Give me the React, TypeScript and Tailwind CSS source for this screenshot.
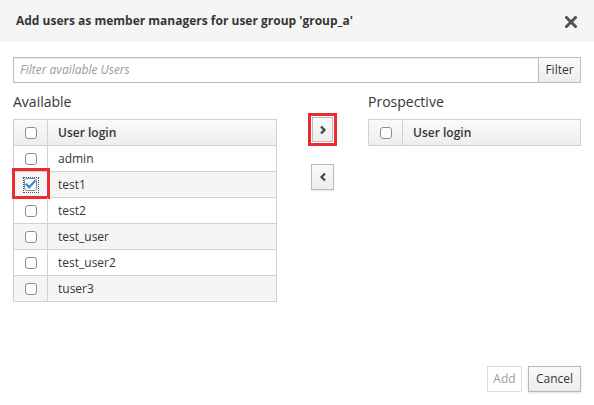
import React from "react";

const Box = ({ checked = false }: { checked?: boolean }) =>
  checked ? (
    <div className="relative w-[14px] h-[14px] outline outline-1 outline-dotted outline-[#2b5b8a] outline-offset-0 flex items-center justify-center">
      <svg width="13" height="13" viewBox="0 0 13 13">
        <rect x="0.5" y="0.5" width="12" height="12" rx="2.5" fill="#fff" stroke="#8b8d8f" />
        <path d="M2.6 6.6 L5.2 9.2 L10.6 3.4" fill="none" stroke="#3c8bcc" strokeWidth="2.4" strokeLinecap="square" />
      </svg>
    </div>
  ) : (
    <div className="w-[12px] h-[12px] rounded-[3px] border border-[#8b8d8f] bg-white" />
  );

const Table = ({
  rows,
  width,
  selected,
}: {
  rows: string[];
  width: string;
  selected?: number;
}) => (
  <div className={`${width} border border-[#d1d1d1]`}>
    <div className="flex h-[25px] bg-gradient-to-b from-[#fafafa] to-[#ededed]">
      <div className="w-[34px] border-r border-[#d1d1d1] flex items-center justify-center">
        <Box />
      </div>
      <div className="pl-[10px] flex items-center text-[12px] font-semibold text-[#363636]">User login</div>
    </div>
    {rows.map((r, i) => (
      <div
        key={r}
        className={`flex h-[26px] border-t border-[#d1d1d1] ${i % 2 === 1 ? "bg-[#f5f5f5]" : "bg-white"}`}
      >
        <div className="relative w-[34px] border-r border-[#d1d1d1] flex items-center justify-center">
          <Box checked={selected === i} />
          {selected === i && (
            <div className="absolute left-[-2px] top-[-4px] w-[38px] h-[31px] border-[3px] border-[#ec2b2f]" />
          )}
        </div>
        <div className="pl-[10px] flex items-center text-[12px] text-[#363636]">{r}</div>
      </div>
    ))}
  </div>
);

const Chevron = ({ dir }: { dir: "r" | "l" }) => (
  <svg width="8" height="10" viewBox="0 0 8 10">
    {dir === "r" ? (
      <path d="M2 1.5 L5.5 5 L2 8.5" fill="none" stroke="#3f4346" strokeWidth="2.2" />
    ) : (
      <path d="M6 1.5 L2.5 5 L6 8.5" fill="none" stroke="#3f4346" strokeWidth="2.2" />
    )}
  </svg>
);

export default function App() {
  return (
    <div
      className="w-[594px] h-[405px] bg-white flex flex-col text-[#363636]"
      style={{ fontFamily: "'Open Sans', 'Noto Sans', sans-serif" }}
    >
      <div className="h-[42px] bg-[#f5f5f5] flex items-center justify-between pl-[16px] pr-[17px]">
        <div className="text-[12px] font-bold text-[#363636]">
          Add users as member managers for user group 'group_a'
        </div>
        <svg width="12" height="12" viewBox="0 0 12 12" className="mt-[1px]">
          <path d="M1.5 1.5 L10.5 10.5 M10.5 1.5 L1.5 10.5" stroke="#4d5258" strokeWidth="3" strokeLinecap="round" />
        </svg>
      </div>

      <div className="px-[13px] pt-[15px]">
        <div className="flex h-[26px]">
          <div className="flex-1 border border-[#bbbbbb] border-r-0 flex items-center pl-[6px] text-[12px] italic text-[#9a9a9a] shadow-[inset_0_1px_1px_rgba(0,0,0,0.075)]">
            Filter available Users
          </div>
          <div className="w-[43px] border border-[#bbbbbb] bg-gradient-to-b from-[#fafafa] to-[#ededed] flex items-center justify-center text-[12px] text-[#363636]">
            Filter
          </div>
        </div>

        <div className="flex mt-[9px]">
          <div className="w-[264px]">
            <div className="text-[14px] leading-[20px] h-[20px] mb-[7px]">Available</div>
            <Table
              width="w-[264px]"
              rows={["admin", "test1", "test2", "test_user", "test_user2", "tuser3"]}
              selected={1}
            />
          </div>

          <div className="ml-[31px] mt-[21px] flex flex-col items-center w-[29px]">
            <div className="border-[3px] border-[#ec2b2f] p-[1px]">
              <div className="w-[21px] h-[25px] border border-[#bbbbbb] bg-gradient-to-b from-[#fafafa] to-[#ededed] flex items-center justify-center">
                <Chevron dir="r" />
              </div>
            </div>
            <div className="mt-[18px] w-[23px] h-[26px] border border-[#bbbbbb] bg-gradient-to-b from-[#fafafa] to-[#ededed] flex items-center justify-center shadow-[0_1px_1px_rgba(0,0,0,0.1)]">
              <Chevron dir="l" />
            </div>
          </div>

          <div className="ml-[31px] w-[213px]">
            <div className="text-[14px] leading-[20px] h-[20px] mb-[7px]">Prospective</div>
            <Table width="w-[213px]" rows={[]} />
          </div>
        </div>
      </div>

      <div className="mt-auto flex justify-end gap-[6px] px-[13px] pb-[13px]">
        <div className="w-[35px] h-[26px] border border-[#dddddd] bg-white flex items-center justify-center text-[12px] text-[#9c9c9c]">
          Add
        </div>
        <div className="w-[53px] h-[26px] border border-[#b7b7b7] bg-gradient-to-b from-[#fafafa] to-[#ededed] flex items-center justify-center text-[12px] text-[#363636] shadow-[0_1px_2px_rgba(0,0,0,0.15)]">
          Cancel
        </div>
      </div>
    </div>
  );
}
